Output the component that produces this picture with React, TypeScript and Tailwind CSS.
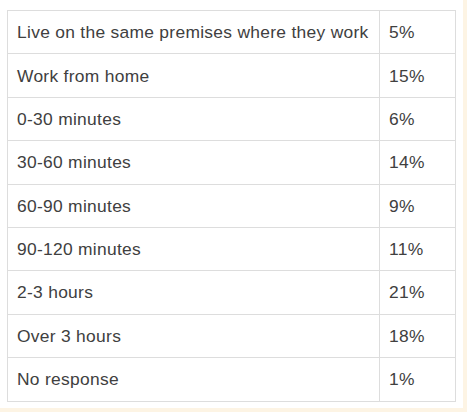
const rows: [string, string][] = [
  ["Live on the same premises where they work", "5%"],
  ["Work from home", "15%"],
  ["0-30 minutes", "6%"],
  ["30-60 minutes", "14%"],
  ["60-90 minutes", "9%"],
  ["90-120 minutes", "11%"],
  ["2-3 hours", "21%"],
  ["Over 3 hours", "18%"],
  ["No response", "1%"],
];

export default function App() {
  return (
    <div className="w-[467px] h-[412px] bg-[#fdf4e4] overflow-hidden">
      <div className="w-[463px] h-[408px] bg-white pt-[10px] pl-[7px]">
        <table
          className="w-[449px] table-fixed border-collapse text-[17.4px] tracking-[0.3px] text-[#404040]"
          style={{ fontFamily: '"Liberation Sans", Arial, sans-serif' }}
        >
          <tbody>
            {rows.map(([label, value]) => (
              <tr key={label} className="h-[43.4px]">
                <td className="w-[372px] border border-[#dddddd] px-[9px] align-middle whitespace-nowrap">{label}</td>
                <td className="border border-[#dddddd] px-[9px] align-middle">{value}</td>
              </tr>
            ))}
          </tbody>
        </table>
      </div>
    </div>
  );
}
